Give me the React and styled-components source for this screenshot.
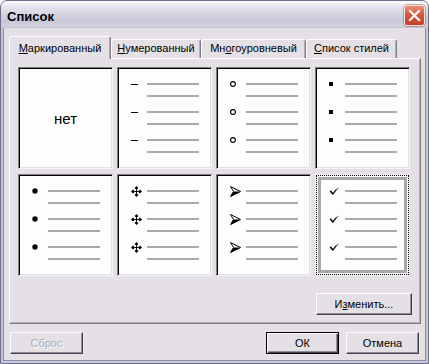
import React from "react";
import styled, { createGlobalStyle } from "styled-components";

const GlobalStyle = createGlobalStyle`
  html, body {
    margin: 0;
    padding: 0;
    background: #ffffff;
  }
  body {
    font-family: "Liberation Sans", Arial, sans-serif;
    font-size: 11px;
    color: #000;
  }
  * {
    box-sizing: border-box;
  }
`;

const tabs = [
  { label: "Маркированный", width: 102, active: true },
  { label: "Нумерованный", width: 90 },
  { label: "Многоуровневый", keyIndex: 2, width: 105 },
  { label: "Список стилей", width: 91 },
];

const cells = [
  { type: "none" },
  { type: "dash" },
  { type: "circle" },
  { type: "square" },
  { type: "disc" },
  { type: "diamonds" },
  { type: "arrow" },
  { type: "check", selected: true },
];

const Bullet = ({ type }) => {
  switch (type) {
    case "dash":
      return <Dash />;
    case "circle":
      return (
        <svg width="6" height="6" viewBox="0 0 6 6">
          <circle cx="3" cy="3" r="2.4" fill="none" stroke="#000" strokeWidth="1.1" />
        </svg>
      );
    case "square":
      return <Square />;
    case "disc":
      return (
        <svg width="6" height="6" viewBox="0 0 6 6">
          <circle cx="3" cy="3" r="2.7" fill="#000" />
        </svg>
      );
    case "diamonds":
      return (
        <svg width="11" height="11" viewBox="0 0 11 11">
          <polygon points="5.5,0 7.4,2 5.5,4 3.6,2" fill="#000" />
          <polygon points="5.5,7 7.4,9 5.5,11 3.6,9" fill="#000" />
          <polygon points="0,5.5 2,3.6 4,5.5 2,7.4" fill="#000" />
          <polygon points="7,5.5 9,3.6 11,5.5 9,7.4" fill="#000" />
          <rect x="5" y="3.5" width="1" height="4" fill="#000" />
          <rect x="3.5" y="5" width="4" height="1" fill="#000" />
        </svg>
      );
    case "arrow":
      return (
        <svg width="11" height="11" viewBox="0 0 11 11">
          <path d="M0.5 0.5 L10.5 5.5 L0.5 10.5 L3.5 5.5 Z" fill="#fff" stroke="#000" strokeWidth="1" strokeLinejoin="round" />
          <path d="M3.5 5.5 L10.5 5.5 L0.5 10.5 Z" fill="#000" />
        </svg>
      );
    case "check":
      return (
        <svg width="11" height="8" viewBox="0 0 11 8">
          <path d="M0.5 4 L2 3.5 L4 6 Q6.5 2 10.5 0.3 Q7 3 4.2 7.8 L3.4 7.8 Z" fill="#000" />
        </svg>
      );
    default:
      return null;
  }
};

const Preview = ({ type }) => {
  if (type === "none") return <NoneLabel>нет</NoneLabel>;
  return (
    <Items>
      {[0, 1, 2].map((i) => (
        <Item key={i}>
          <BulletSlot>
            <Bullet type={type} />
          </BulletSlot>
          <Lines>
            <Line />
            <Line />
          </Lines>
        </Item>
      ))}
    </Items>
  );
};

const Accel = ({ text, index = 0 }) => (
  <>
    {text.slice(0, index)}
    <U>{text[index]}</U>
    {text.slice(index + 1)}
  </>
);

export default function App() {
  return (
    <>
      <GlobalStyle />
      <Window>
        <TitleBar>
          <Title>Список</Title>
          <CloseButton aria-label="Закрыть">
            <svg width="13" height="13" viewBox="0 0 13 13">
              <path d="M2 2 L11 11 M11 2 L2 11" stroke="#fff" strokeWidth="2.2" strokeLinecap="square" />
            </svg>
          </CloseButton>
        </TitleBar>
        <Body>
          <TabRow>
            {tabs.map((t) => (
              <Tab key={t.label} $active={t.active} $width={t.width}>
                <Accel text={t.label} index={t.keyIndex || 0} />
              </Tab>
            ))}
          </TabRow>
          <Panel>
            <Grid>
              {cells.map((c, i) =>
                c.selected ? (
                  <SelectedCell key={i}>
                    <Preview type={c.type} />
                  </SelectedCell>
                ) : (
                  <Cell key={i}>
                    <Preview type={c.type} />
                  </Cell>
                )
              )}
            </Grid>
            <PanelActions>
              <Button $width={96}>
                И<U>з</U>менить...
              </Button>
            </PanelActions>
          </Panel>
          <Footer>
            <Button $width={73} disabled>
              Сброс
            </Button>
            <FooterRight>
              <Button $width={73} $default>
                ОК
              </Button>
              <Button $width={73}>Отмена</Button>
            </FooterRight>
          </Footer>
        </Body>
      </Window>
    </>
  );
}

const Window = styled.div`
  width: 429px;
  height: 364px;
  display: flex;
  flex-direction: column;
  border: 1px solid #6f6e88;
  border-radius: 7px 7px 0 0;
  background: #c7c6d6;
  overflow: hidden;
`;

const TitleBar = styled.div`
  height: 27px;
  display: flex;
  justify-content: space-between;
  align-items: flex-start;
  padding: 0 3px 0 6px;
  background: linear-gradient(
    180deg,
    #fcfcfd 0%,
    #e6e5ee 20%,
    #d5d4e1 50%,
    #c8c7d7 75%,
    #d4d3df 92%,
    #c2c1d2 100%
  );
`;

const Title = styled.div`
  padding-top: 8px;
  font-size: 13px;
  line-height: 15px;
  font-weight: bold;
  color: #000;
`;

const CloseButton = styled.div`
  margin-top: 4px;
  width: 21px;
  height: 21px;
  display: flex;
  align-items: center;
  justify-content: center;
  border: 1px solid #f3e4e2;
  border-radius: 3px;
  background: linear-gradient(180deg, #eb8f76 0%, #d95740 45%, #c63f28 100%);
  box-shadow: 0 0 0 0.5px #b05a50;
`;

const Body = styled.div`
  flex: 1;
  display: flex;
  flex-direction: column;
  margin: 0 2px 2px;
  padding: 8px 4px 6px 5px;
  background: #e4e0e6;
  border: 1px solid #8f8ea5;
  border-top: none;
`;

const TabRow = styled.div`
  height: 22px;
  display: flex;
  align-items: flex-end;
  position: relative;
  z-index: 1;
`;

const Tab = styled.div`
  width: ${(p) => p.$width}px;
  height: ${(p) => (p.$active ? 23 : 19)}px;
  margin-bottom: ${(p) => (p.$active ? -1 : 0)}px;
  padding-bottom: ${(p) => (p.$active ? 4 : 3)}px;
  display: flex;
  align-items: flex-end;
  justify-content: center;
  line-height: 13px;
  white-space: nowrap;
  background: #e4e0e6;
  border-top: 1px solid #ffffff;
  border-left: 1px solid #ffffff;
  border-right: 1px solid #7d7b8a;
  border-radius: 3px 3px 0 0;
  box-shadow: inset -1px 0 0 #b1afbb;
`;

const U = styled.span`
  text-decoration: underline;
  text-underline-offset: 1px;
`;

const Panel = styled.div`
  height: 266px;
  display: flex;
  flex-direction: column;
  padding: 8px;
  border-top: 1px solid #ffffff;
  border-left: 1px solid #ffffff;
  border-right: 1px solid #7d7b8a;
  border-bottom: 1px solid #7d7b8a;
  box-shadow: inset -1px -1px 0 #b1afbb;
`;

const Grid = styled.div`
  display: grid;
  grid-template-columns: repeat(4, 95px);
  grid-auto-rows: 102px;
  column-gap: 4px;
  row-gap: 5px;
`;

const Cell = styled.div`
  position: relative;
  background: #fcfdfc;
  border: 1px solid;
  border-color: #7f7f7f #f4f4f4 #f4f4f4 #7f7f7f;
  box-shadow: inset 1px 1px 0 #000, inset -1px -1px 0 #e2e0e4;
  padding: 15px 0 0 12px;
`;

const SelectedCell = styled(Cell)`
  border: 1px solid #f2f2f2;
  box-shadow: none;
  outline: 1px dotted #000;
  outline-offset: -2px;

  &::after {
    content: "";
    position: absolute;
    inset: 2px;
    border: 3px solid #a8a8a8;
    pointer-events: none;
  }
`;

const NoneLabel = styled.div`
  position: absolute;
  inset: 0;
  display: flex;
  align-items: center;
  justify-content: center;
  font-size: 15px;
  color: #000;
  padding-top: 1px;
`;

const Items = styled.div`
  display: flex;
  flex-direction: column;
  gap: 14px;
`;

const Item = styled.div`
  display: flex;
  align-items: flex-start;
`;

const BulletSlot = styled.div`
  width: 17px;
  height: 2px;
  display: flex;
  align-items: center;
  justify-content: flex-start;
  padding-left: 1px;

  svg {
    flex-shrink: 0;
    display: block;
  }
`;

const Dash = styled.span`
  display: block;
  width: 7px;
  height: 1px;
  background: #000;
`;

const Square = styled.span`
  display: block;
  width: 4px;
  height: 4px;
  background: #000;
`;

const Lines = styled.div`
  display: flex;
  flex-direction: column;
  gap: 10px;
`;

const Line = styled.div`
  width: 52px;
  height: 2px;
  background: #aaaaaa;
`;

const PanelActions = styled.div`
  margin-top: 17px;
  display: flex;
  justify-content: flex-end;
`;

const Footer = styled.div`
  margin-top: 8px;
  display: flex;
  justify-content: space-between;
  padding: 0 2px 0 1px;
`;

const FooterRight = styled.div`
  display: flex;
  gap: 7px;
`;

const Button = styled.button`
  width: ${(p) => p.$width}px;
  height: 22px;
  padding: 0;
  font-family: "Liberation Sans", Arial, sans-serif;
  font-size: 11px;
  color: #000;
  background: #e4e0e6;
  border: 1px solid;
  border-color: ${(p) => (p.$default ? "#000" : "#ffffff #45434f #45434f #ffffff")};
  box-shadow: ${(p) =>
    p.$default
      ? "inset 1px 1px 0 #ffffff, inset -1px -1px 0 #45434f, inset -2px -2px 0 #8d8b99"
      : "inset -1px -1px 0 #8d8b99"};
  border-radius: 0;

  &:disabled {
    color: #aca8b0;
    text-shadow: 1px 1px 0 #ffffff;
  }
`;
